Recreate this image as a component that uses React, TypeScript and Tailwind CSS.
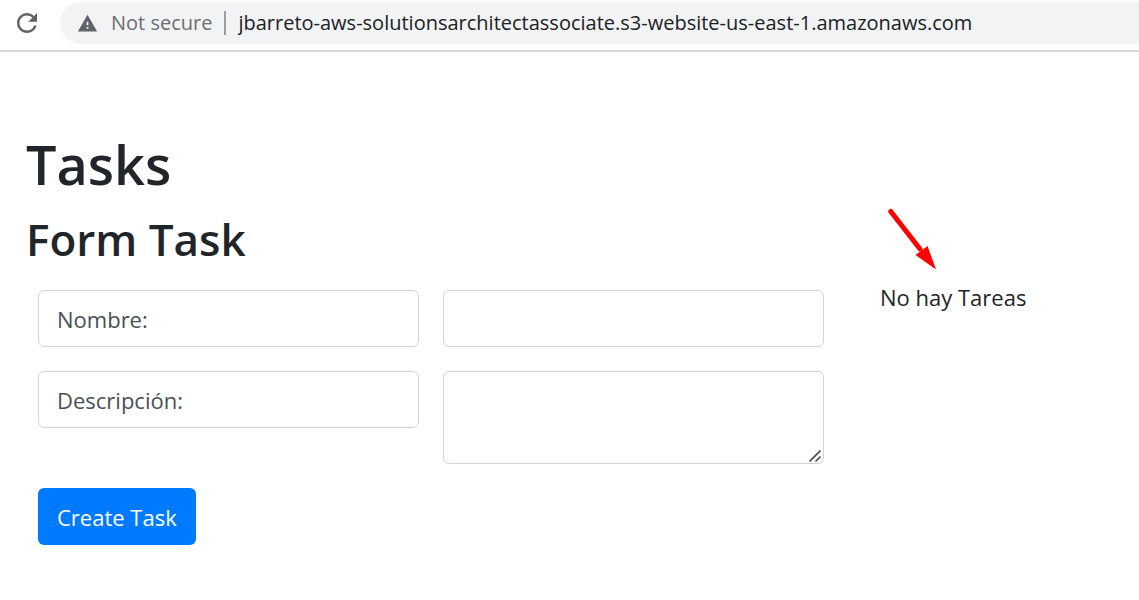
import { MdRefresh, MdWarning } from "react-icons/md";

function AddressBar() {
  return (
    <header className="flex h-[52px] items-start border-b-2 border-[#dadada] bg-white pt-0.5">
      <button type="button" aria-label="Reload" className="flex h-[42px] w-[60px] items-center pl-3 text-[#5f6368]">
        <MdRefresh size={30} />
      </button>
      <div className="flex h-[42px] min-w-0 flex-1 items-center rounded-l-full bg-[#f1f3f4] text-[20px]">
        <MdWarning size={21} className="ml-[17px] shrink-0 text-[#5f6368]" />
        <span className="ml-[13px] shrink-0 text-[#6b6e72]">Not secure</span>
        <span className="mx-3 h-6 w-0.5 shrink-0 bg-[#9a9da1]" />
        <span className="truncate text-[#202124]">
          jbarreto-aws-solutionsarchitectassociate.s3-website-us-east-1.amazonaws.com
        </span>
      </div>
    </header>
  );
}

function ResizeGrip() {
  return (
    <svg className="pointer-events-none absolute right-[3px] bottom-0.5 h-3 w-3" viewBox="0 0 12 12" fill="none" stroke="#4a4a4a" strokeWidth="1.6">
      <path d="M0.5 11.5 11.5 0.5M6.5 11.5 11.5 6.5" />
    </svg>
  );
}

function Arrow() {
  return (
    <svg className="absolute bottom-full left-2 mb-[9px] h-[62px] w-12" viewBox="0 0 48 62" fill="#ff0000">
      <path d="M2.800 3.500 32 41" stroke="#ff0000" strokeWidth="5" strokeLinecap="round" />
      <path d="M27.500 47 39.500 38 48 61.500Z" />
    </svg>
  );
}

const field = "w-full rounded-md border border-[#ced4da] bg-white px-[18px] text-[#495057]";

export default function App() {
  return (
    <div className="min-h-screen bg-white font-['Open_Sans','Noto_Sans',sans-serif] text-[22px] leading-9 text-[#212529]">
      <AddressBar />
      <main className="pt-[76px] pr-[33px] pl-[26px]">
        <h1 className="text-[54px] leading-[72px] font-semibold">Tasks</h1>
        <div className="mt-3 flex">
          <section className="w-3/4">
            <h2 className="text-[44px] leading-[54px] font-semibold">Form Task</h2>
            <form className="mt-6 grid grid-cols-2 gap-6 px-3" onSubmit={(e) => e.preventDefault()}>
              <label htmlFor="name" className={`${field} flex h-[57px] items-center`}>Nombre:</label>
              <input id="name" type="text" className={`${field} h-[57px]`} />
              <label htmlFor="description" className={`${field} flex h-[57px] items-center`}>Descripción:</label>
              <div className="relative h-[93px]">
                <textarea id="description" className={`${field} block h-full resize-none py-2`} />
                <ResizeGrip />
              </div>
              <button type="submit" className="h-[57px] justify-self-start rounded-md bg-[#007bff] px-[19px] text-white">
                Create Task
              </button>
            </form>
          </section>
          <section className="flex-1 pt-[67px] pl-11">
            <div className="relative">
              <p>No hay Tareas</p>
              <Arrow />
            </div>
          </section>
        </div>
      </main>
    </div>
  );
}
